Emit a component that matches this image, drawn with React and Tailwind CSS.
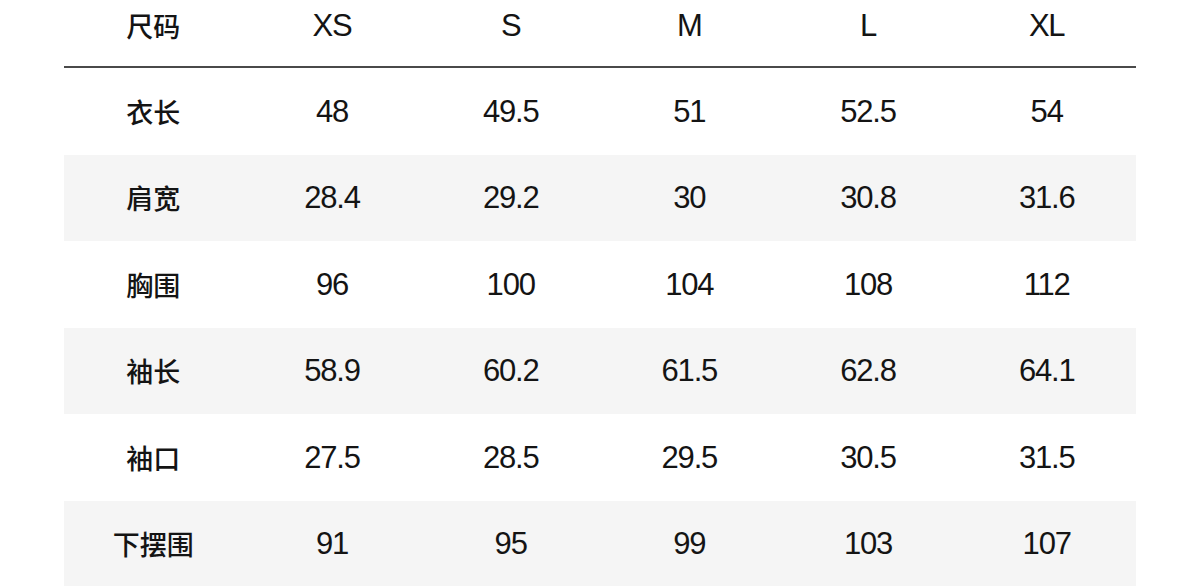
import React from "react";

const sizes = ["XS", "S", "M", "L", "XL"];
const rows = [
  ["衣长", "48", "49.5", "51", "52.5", "54"],
  ["肩宽", "28.4", "29.2", "30", "30.8", "31.6"],
  ["胸围", "96", "100", "104", "108", "112"],
  ["袖长", "58.9", "60.2", "61.5", "62.8", "64.1"],
  ["袖口", "27.5", "28.5", "29.5", "30.5", "31.5"],
  ["下摆围", "91", "95", "99", "103", "107"],
];

const latin = { fontFamily: '"Liberation Sans", Arial, sans-serif' };
const cjk = { fontFamily: '"Noto Sans CJK SC", "Liberation Sans", sans-serif' };

function Cjk({ children }) {
  return (
    <div className="flex justify-center">
      <span className="text-[27px] leading-none font-medium" style={cjk}>{children}</span>
    </div>
  );
}

function Num({ children }) {
  return (
    <div className="flex justify-center">
      <span className="text-[31px] leading-none tracking-[-1.2px]" style={latin}>{children}</span>
    </div>
  );
}

export default function App() {
  return (
    <div className="w-[1200px] h-[586px] overflow-hidden bg-white text-[#141414]">
      <div className="mx-[64px] w-[1072px]">
        <div className="grid grid-cols-6 h-[68px] pb-[16px] items-center border-b-2 border-[#4a4a4a]">
          <Cjk>尺码</Cjk>
          {sizes.map((s) => (
            <Num key={s}>{s}</Num>
          ))}
        </div>
        {rows.map((r, i) => (
          <div
            key={r[0]}
            className={`grid grid-cols-6 h-[86.5px] items-center ${i % 2 === 1 ? "bg-[#f5f5f5]" : "bg-white"}`}
          >
            <Cjk>{r[0]}</Cjk>
            {r.slice(1).map((v, j) => (
              <Num key={j}>{v}</Num>
            ))}
          </div>
        ))}
      </div>
    </div>
  );
}
